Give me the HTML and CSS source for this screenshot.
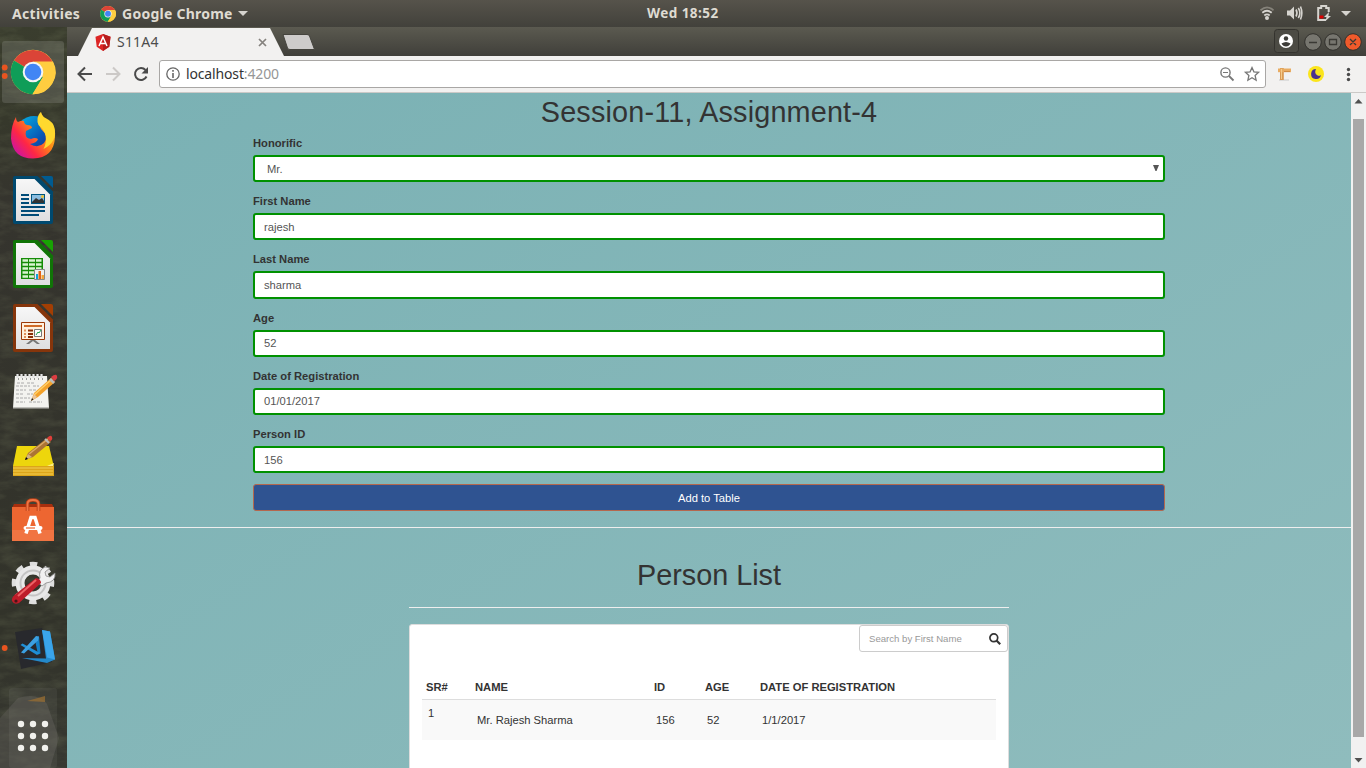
FILE: index.html
```html
<!DOCTYPE html>
<html lang="en">
<head>
<meta charset="utf-8">
<title>S11A4</title>
<link rel="stylesheet" href="styles.css">
</head>
<body>
<div class="desktop">
  <header class="topbar">
    <span class="activities">Activities</span>
    <svg class="mini-chrome" width="16" height="16" viewBox="10.5 50 45 45"><use href="#chrome-logo"/></svg>
    <span class="app-name">Google Chrome</span>
    <svg class="caret" width="10" height="5" viewBox="0 0 10 5"><path d="M0 0h10L5 5z" fill="#d6d4cf"/></svg>
    <span class="clock">Wed 18:52</span>
    <svg class="tray" width="106" height="27" viewBox="1260 0 106 27">
      <g fill="none" stroke-width="1.8"><path d="M1260.500 10.300Q1267 4.500 1273.500 10.300" stroke="#85827a"/><path d="M1262.300 12.800Q1267 8.800 1271.700 12.800M1264.300 15.500Q1267 13.200 1269.700 15.500" stroke="#d6d4cf"/></g>
      <circle cx="1267" cy="18" r="2" fill="#d6d4cf"/>
      <path d="M1287 10.500h3l4-4v13l-4-4h-3z" fill="#d6d4cf"/>
      <path d="M1296 9.500q2 3.500 0 7M1298.300 8q3.200 5 0 10M1300.500 6.500q2.700 6.500 0 13" fill="none" stroke="#d6d4cf" stroke-width="1.6"/>
      <path d="M1326 20h-7.800V8h3V6h5v2h2.500v4" fill="none" stroke="#d6d4cf" stroke-width="2"/>
      <path d="M1319.500 15.500h4v3h-4z" fill="#d00"/><path d="M1329 12l-5 5h2.500l-1 4 5.500-5h-2.600z" fill="#d6d4cf"/>
      <path d="M1341 11h10l-5 5z" fill="#d6d4cf"/>
    </svg>
  </header>
  <div class="workspace">
    <nav class="dock">
      <svg class="wallpaper" width="67" height="741" viewBox="0 27 67 741">
        <defs>
          <filter id="grass" x="0" y="0" width="100%" height="100%"><feTurbulence type="fractalNoise" baseFrequency=".045 .11" numOctaves="4" seed="8"/><feColorMatrix values="0 0 0 0 .33  0 0 0 0 .37  0 0 0 0 .2  1.6 0 0 0 -.6"/></filter>
          <linearGradient id="dusk" x2="0" y2="1"><stop offset="0" stop-color="#3a3d2e"/><stop offset=".12" stop-color="#36382b"/><stop offset=".24" stop-color="#35342e"/><stop offset=".82" stop-color="#32332a"/><stop offset="1" stop-color="#363731"/></linearGradient>
        </defs>
        <path d="M0 27h67v741H0z" fill="url(#dusk)"/>
        <path d="M0 27h67v741H0z" filter="url(#grass)" opacity=".2"/>
        <path d="M0 718L18 698Q38 692 47 704L59 738 50 768H0z" fill="#62605a" opacity=".4"/>
        <path d="M27 701l18-5v6z" fill="#8e6429" opacity=".8"/>
      </svg>
      <svg class="dock-icon" viewBox="0 40 67 64">
        <rect x="2" y="41" width="62" height="62" rx="3" fill="#fff" opacity=".13"/>
        <circle cx="4.700" cy="67.500" r="2.900" fill="#e95420"/><circle cx="4.700" cy="76" r="2.900" fill="#e95420"/>
        <g id="chrome-logo"><circle cx="33" cy="72" r="22.200" fill="#fc4"/>
        <path d="M33 72L14 60.500a22.200 22.200 0 0 1 38.700 1.500H33z" fill="#db4437"/>
        <path d="M33 72L14 60.500A22.200 22.200 0 0 0 32.500 94.200L43 77z" fill="#0f9d58"/>
        <path d="M33 61.500h20a22.200 22.200 0 0 1-20.500 32.700L43 77z" fill="#ffcd40"/>
        <circle cx="33" cy="72" r="10.300" fill="#f5f5f5"/><circle cx="33" cy="72" r="8.300" fill="#4285f4"/></g>
      </svg>
      <svg class="dock-icon" viewBox="0 104 67 64">
        <defs><linearGradient id="fox" x1=".9" y1=".1" x2=".1" y2=".8"><stop stop-color="#ffdc35"/><stop offset=".4" stop-color="#ff8a16"/><stop offset=".75" stop-color="#ff2744"/><stop offset="1" stop-color="#d61792"/></linearGradient><linearGradient id="globe" x2="1" y2="1"><stop stop-color="#05b9e8"/><stop offset=".6" stop-color="#0757b5"/><stop offset="1" stop-color="#291f79"/></linearGradient></defs>
        <circle cx="34" cy="135" r="19" fill="url(#globe)"/>
        <path d="M16 117q0 4 2 5 4-2 6-1 0 3 3 4 5 0 5 3l-6 3q-2 7 5 8 4-2 7 0-1 4-8 5 8 5 14-1 5-7-3-14-5-9 0-17 2 7 9 10 6 6 5 15-1 21-22 21.500-20 0-22-20Q11 125 16 117z" fill="url(#fox)"/>
        <path d="M40.500 112q-5 6-2 13 12 10 5 24 14-7 11-21-1-6-9-10-4-2-5-6z" fill="#ffd92e"/>
      </svg>
      <svg class="dock-icon" viewBox="0 168 67 64">
        <defs><linearGradient id="paper" x2="0" y2="1"><stop stop-color="#f7f7f7"/><stop offset="1" stop-color="#dedee0"/></linearGradient></defs>
        <path d="M15 176h22.500L53 191.500V222q0 2-2 2H15q-2 0-2-2v-44q0-2 2-2z" fill="#00496f"/><path d="M41 176h10q2 0 2 2v10z" fill="#005b91"/>
        <path d="M16 179h18.500l15.500 15.500V221H16z" fill="url(#paper)"/>
        <path d="M21 195h8m-8 4h8m-8 4h8m-8 4h24m-24 4h24m-24 4h18" stroke="#004b78" stroke-width="2"/><path d="M31 194h14v10H31z" fill="#00557f"/><path d="M32 195h12v8H32z" fill="#8bbde0"/><path d="M32 202l4-4 3 2 3-2 2 3v2H32z" fill="#333"/><circle cx="42.500" cy="196.500" r="1.500" fill="#edc33a"/>
      </svg>
      <svg class="dock-icon" viewBox="0 232 67 64">
        <path d="M15 240h22.500L53 255.500V286q0 2-2 2H15q-2 0-2-2v-44q0-2 2-2z" fill="#107407"/><path d="M41 240h10q2 0 2 2v10z" fill="#18a303"/>
        <path d="M16 243h18.500l15.500 15.500V285H16z" fill="url(#paper)"/>
        <path d="M21 258h22v21H21z" fill="#168c08"/><path d="M22.500 260.500h19m-19 4h19m-19 4h19m-19 4h19m-19 4h19" stroke="#d8f4d0" stroke-width="2.500"/><path d="M28.500 258v21m7-21v21" stroke="#168c08"/>
        <path d="M34.500 269.500h10v10h-10z" fill="#eee" stroke="#888"/><path d="M36 274h2v5h-2z" fill="#08a5dc"/><path d="M38.500 271h2.500v8h-2.500z" fill="#e36315"/><path d="M41.500 275h2.500v4h-2.500z" fill="#f3a73c"/>
      </svg>
      <svg class="dock-icon" viewBox="0 296 67 64">
        <path d="M15 304h22.500L53 319.500V350q0 2-2 2H15q-2 0-2-2v-44q0-2 2-2z" fill="#86350b"/><path d="M41 304h10q2 0 2 2v10z" fill="#a33e03"/>
        <path d="M16 307h18.500l15.500 15.500V349H16z" fill="url(#paper)"/>
        <path d="M21.500 322.500h23v17h-23z" fill="#fff1df" stroke="#9b3908"/><path d="M24 326h18" stroke="#cf6b28" stroke-width="2"/><path d="M24 330.500h2m-2 3.500h2m-2 3h2" stroke="#e0905c" stroke-width="2"/><path d="M28 330.500h5m-5 3.500h5m-5 3h5" stroke="#8a2f08" stroke-width="2"/><path d="M34.500 329.500h7v7h-7z" fill="#fff" stroke="#777"/><path d="M36 335l2-3 1 1 2-3" fill="none" stroke="#22a04b"/><path d="M31 340l-5 4h3l4-3 4 3h3l-5-4" fill="#777"/>
      </svg>
      <svg class="dock-icon" viewBox="0 360 67 64">
        <path d="M15 376h32l2 32H13z" fill="#f3f3ef"/><path d="M13 407h36v1.500H13z" fill="#bcbcb7"/>
        <path d="M17.500 378v-4m4 4v-4m4 4v-4m4 4v-4m4 4v-4m4 4v-4m4 4v-4" stroke="#e4e4e4" stroke-width="2.200"/><path d="M18 379h1m3 0h1m3 0h1m3 0h1m3 0h1m3 0h1m3 0h1" stroke="#444"/>
        <path d="M17 383h8m2 0h8M16 386h14m3 0h6M16 390h10m3 0h7M16 394h8m3 0h6M16 398h14M16 402h9m4 0h13" stroke="#aaa" stroke-dasharray="3 1"/>
        <path d="M31 401l3-8 17-15 4 4-17 15z" fill="#f3a12a"/><path d="M34 395l18-16" stroke="#ffd068" stroke-width="1.500"/><path d="M31 401l3-7 3 3z" fill="#e8c49b"/><path d="M31 401l1-3 1.500 1.500z" fill="#222"/><path d="M50 379l4 4" stroke="#bbb" stroke-width="2.500"/><path d="M51 377q5-4 6-1t-3 5z" fill="#dc3d42"/>
      </svg>
      <svg class="dock-icon" viewBox="0 424 67 64">
        <path d="M17 446h32l5 21-1 9H13v-10z" fill="#edd60c"/><path d="M13 466h41v10H13z" fill="#dca51a"/><path d="M13 468h40m-40 3h40m-40 3h40" stroke="#f4cf50"/><path d="M47 466l7-3-1 3z" fill="#fff086"/>
        <path d="M25 460l3-7 19-15 4 4-18 15z" fill="#ac7434"/><path d="M29 454l19-15" stroke="#dbab66" stroke-width="1.500"/><path d="M25 460l3-6 4 3z" fill="#d2b27c"/><path d="M25 460l1-3 2 2z"/><path d="M45 439l4 4" stroke="#bbb" stroke-width="2"/><path d="M47 438q4-4 5-1t-2 4z" fill="#df3f3a"/>
      </svg>
      <svg class="dock-icon" viewBox="0 488 67 64">
        <path d="M14 504h38l2 4H12z" fill="#a72f0e"/><path d="M12 507h42v34H12z" fill="#ed6631"/><path d="M12 530h42v11H12z" fill="#f17442"/><path d="M27.500 511v-7q0-4 5.500-4t5.500 4v7" fill="none" stroke="#bc4017" stroke-width="3.600"/><path d="M27.500 511v-7q0-4 5.500-4t5.500 4v7" fill="none" stroke="#ef7545" stroke-width="1.800"/>
        <path d="M26 533.500l5-16h4l5 16" fill="none" stroke="#fff" stroke-width="3.500"/><path d="M25.500 528h15" stroke="#fff" stroke-width="4" stroke-linecap="round"/><path d="M26 528h9" stroke="#ed6631" stroke-width="1.200"/>
      </svg>
      <svg class="dock-icon" viewBox="0 552 67 64">
        <circle cx="33" cy="583" r="18.800" fill="none" stroke="#dedede" stroke-width="5" stroke-dasharray="7.400 7.360" stroke-dashoffset="3.700"/><circle cx="33" cy="583" r="13" fill="none" stroke="#e8e8e8" stroke-width="9"/><circle cx="33" cy="583" r="12.500" fill="none" stroke="#c4c4c4" stroke-width="2"/>
        <path d="M37 582l3-4q-2-8 5-11l5 1-5 4 1 4 4 1 5-4q1 9-9 10l-4 3z" fill="#f1f1f1" stroke="#888" stroke-width=".8"/><path d="M36 578q5 1 5 5l-22 20q-5 2-7-2-1-4 5-8z" fill="#bd1c29"/><path d="M18 596l18-16" stroke="#ed6265" stroke-width="2"/><circle cx="16" cy="601" r="1.600" fill="#481418"/>
      </svg>
      <svg class="dock-icon" viewBox="0 616 67 64">
        <circle cx="4.700" cy="648" r="2.900" fill="#e95420"/><path d="M15 632l27-4 10 34-31 7z" fill="#28292d"/>
        <path d="M42 630l8 1.500 5 28-8 3.500-25-5 24 .5z" fill="#2489ca"/><path d="M42 630l8 1.500 5 28-8-2z" fill="#3aa5eb"/><path d="M39 636l1.500 17.500-2.500 1-2.500-12z" fill="#1480c6"/><path d="M20.500 645l2-1.500L40 653l-3 2z" fill="#1f8fd6"/><path d="M21 652.500L36 636l3 .5-1 4-14 13z" fill="#3ba0e2"/>
      </svg>
      <svg class="dock-icon apps" viewBox="0 680 67 88">
        <rect x="9" y="688" width="48" height="80" rx="3" fill="#fff" opacity=".05"/>
        <g fill="#f1f1ed"><circle cx="21" cy="724" r="3.200"/><circle cx="33" cy="724" r="3.200"/><circle cx="45" cy="724" r="3.200"/><circle cx="21" cy="736" r="3.200"/><circle cx="33" cy="736" r="3.200"/><circle cx="45" cy="736" r="3.200"/><circle cx="21" cy="748" r="3.200"/><circle cx="33" cy="748" r="3.200"/><circle cx="45" cy="748" r="3.200"/></g>
      </svg>
    </nav>
    <section class="browser">
      <div class="tabstrip">
        <div class="tab">
          <svg class="angular" width="16" height="17" viewBox="0 0 16 17"><path d="M8 0l7.500 2.800-1.200 10L8 17l-6.300-4.200-1.200-10z" fill="#dd2525"/><path d="M8 0l7.500 2.800-1.200 10L8 17z" fill="#b71c1c"/><path d="M4 12L8 3l4 9M5.500 9.500h5" fill="none" stroke="#fff" stroke-width="1.500"/></svg>
          <span class="tab-title">S11A4</span>
          <svg width="9" height="9" viewBox="0 0 9 9"><path d="M1 1l7 7M8 1L1 8" stroke="#85827e" stroke-width="1.700"/></svg>
        </div>
        <svg class="new-tab" width="34" height="16" viewBox="0 0 34 16"><path d="M1 .5h24q2 0 2.500 1.500L32.500 15.500H8q-2 0-2.500-1.500z" fill="#cecccb" stroke="#45443e"/></svg>
        <svg class="controls" width="96" height="29" viewBox="1270 27 96 29">
          <rect x="1274.500" y="29.500" width="24" height="23" rx="3" fill="#4c4b44" stroke="#34332e"/><circle cx="1286" cy="41" r="7" fill="#fff"/><circle cx="1286" cy="38.500" r="2.200" fill="#3c3b37"/><path d="M1281.500 43.500q4.500-3 9 0-1.500 3-4.500 3t-4.500-3z" fill="#3c3b37"/>
          <g fill="#77766f" stroke="#32312d"><circle cx="1313" cy="42" r="8.300"/><circle cx="1333" cy="42" r="8.300"/></g><circle cx="1353" cy="42" r="8.300" fill="#f05a2b" stroke="#32312d"/>
          <path d="M1309 42.500h8M1329.500 39.500h7v5h-7zM1350 39l6 6m0-6l-6 6" fill="none" stroke="#3a3934" stroke-width="1.300"/>
        </svg>
      </div>
      <div class="toolbar">
        <svg class="nav-icons" width="92" height="36" viewBox="67 56 92 36" fill="none" stroke-width="2"><path d="M92 74H79m6-6.500L78.500 74l6.500 6.500" stroke="#4a4a4a"/><path d="M106 74h13m-6-6.500l6.500 6.500-6.500 6.500" stroke="#ccc9c7"/><path d="M146.500 76.500A6 6 0 1 1 145.500 70" stroke="#4a4a4a"/><path d="M148 67v6.500h-6.500z" fill="#4a4a4a"/></svg>
        <div class="omnibox">
          <svg width="14" height="14" viewBox="0 0 14 14"><circle cx="7" cy="7" r="6.200" fill="none" stroke="#666" stroke-width="1.300"/><path d="M7 6v5M7 3v1.700" stroke="#666" stroke-width="1.600"/></svg>
          <span class="url">localhost<span class="port">:4200</span></span>
          <svg class="omni-icons" width="46" height="22" viewBox="1216 63 46 22" fill="none" stroke="#777"><circle cx="1225.500" cy="72.500" r="4.600" stroke-width="1.400"/><path d="M1229 76l4.500 4.500" stroke-width="1.800"/><path d="M1223 72.500h5"/><path d="M1252 67.500l1.900 4.300 4.700.5-3.500 3.200 1 4.700-4.100-2.500-4.100 2.500 1-4.700-3.500-3.200 4.700-.5z" stroke-width="1.300"/></svg>
        </div>
        <svg class="extensions" width="100" height="36" viewBox="1266 56 100 36"><path d="M1279 79h10v2h-10z" fill="#ddd"/><path d="M1280 68h3.800v12h-3.800z" fill="#d99a54"/><path d="M1278 68.500h13v3.700h-13z" fill="#e9ac62"/><path d="M1281.500 69v10" stroke="#f5cc8c"/><path d="M1284 71.500h6" stroke="#d08c44"/><circle cx="1316" cy="74" r="8" fill="#fbe51c"/><path d="M1316 69a5 5 0 1 0 5 6q-2 1.700-4 0-3-2-1-6z" fill="#4b318e"/><g fill="#4a4a4a"><circle cx="1348.500" cy="69.500" r="1.700"/><circle cx="1348.500" cy="74.500" r="1.700"/><circle cx="1348.500" cy="79.500" r="1.700"/></g></svg>
      </div>
      <div class="viewport">
        <main class="page">
          <h1 class="title main-title">Session-11, Assignment-4</h1>
          <form class="form">
            <div class="group"><label class="label">Honorific</label><div class="field select"><span>Mr.</span><svg width="6" height="6" viewBox="0 0 6 6"><path d="M0 0h6L3.500 6h-1z" fill="#555"/></svg></div></div>
            <div class="group"><label class="label">First Name</label><div class="field">rajesh</div></div>
            <div class="group"><label class="label">Last Name</label><div class="field">sharma</div></div>
            <div class="group"><label class="label">Age</label><div class="field">52</div></div>
            <div class="group"><label class="label">Date of Registration</label><div class="field">01/01/2017</div></div>
            <div class="group"><label class="label">Person ID</label><div class="field">156</div></div>
            <button class="add" type="button">Add to Table</button>
          </form>
          <hr class="rule">
          <section class="list">
            <h2 class="title list-title">Person List</h2>
            <hr class="rule list-rule">
            <div class="panel">
              <div class="search"><span>Search by First Name</span><svg width="12" height="12" viewBox="0 0 12 12" fill="none" stroke="#333"><circle cx="4.800" cy="4.800" r="3.900" stroke-width="1.700"/><path d="M7.500 7.500l3.700 3.700" stroke-width="2.200"/></svg></div>
              <div class="table">
                <div class="row head"><span>SR#</span><span>NAME</span><span>ID</span><span>AGE</span><span>DATE OF REGISTRATION</span></div>
                <div class="row record"><span class="serial">1</span><span>Mr. Rajesh Sharma</span><span>156</span><span>52</span><span>1/1/2017</span></div>
              </div>
            </div>
          </section>
        </main>
        <div class="scrollbar"><svg width="15" height="26" viewBox="0 0 15 26"><path d="M3.500 10.500h8l-4-4.500z" fill="#505050"/></svg><div class="thumb"></div><svg width="15" height="31" viewBox="0 0 15 31"><path d="M3.500 21h8l-4 4.500z" fill="#505050"/></svg></div>
      </div>
    </section>
  </div>
</div>
</body>
</html>
```
FILE: styles.css
```css
* { box-sizing: border-box; }
body { margin: 0; overflow: hidden; font-family: "Liberation Sans", Arial, sans-serif; }
svg { display: block; flex: none; }
.desktop { width: 1366px; height: 768px; display: flex; flex-direction: column; overflow: hidden; }
.topbar { position: relative; height: 27px; flex: none; display: flex; align-items: center; padding-left: 12px; background: linear-gradient(#56534b, #42413b); color: #dfdbd2; font: bold 14px/27px "Noto Sans", "Open Sans", sans-serif; white-space: nowrap; }
.activities { width: 88px; letter-spacing: .32px; }
.mini-chrome { margin-right: 6px; }
.app-name { width: 116px; font-size: 14px; letter-spacing: .25px; }
.clock { position: absolute; left: 647px; top: 0; font-size: 13.500px; letter-spacing: .45px; }
.tray { margin-left: auto; }
.workspace { flex: 1; display: flex; min-height: 0; }
.dock { position: relative; width: 67px; flex: none; padding-top: 13px; background: #35352c; }
.wallpaper { position: absolute; left: 0; top: 0; }
.dock-icon { position: relative; width: 67px; height: 64px; }
.apps { height: 88px; }
.browser { flex: 1; display: flex; flex-direction: column; min-width: 0; }
.tabstrip { height: 29px; flex: none; display: flex; background: linear-gradient(#5b5a50, #403f3a); }
.tab { width: 206px; height: 28px; margin: 1px 0 0 11px; padding: 0 17px; display: flex; align-items: center; background: #f2f1f0; clip-path: polygon(14px 0, 192px 0, 206px 100%, 0 100%); color: #4c4c4c; font: 14px/28px "Noto Sans", "Open Sans", sans-serif; }
.tab-title { flex: 1; padding-left: 6px; letter-spacing: .2px; }
.new-tab { margin: 7px 0 0 -2px; }
.controls { margin-left: auto; }
.toolbar { height: 37px; flex: none; display: flex; background: #f2f1f0; border-bottom: 1px solid #cbc9c7; }
.omnibox { width: 1107px; height: 28px; margin-top: 4px; display: flex; align-items: center; padding: 0 3px 0 6px; border: 1px solid #a9a7a5; border-radius: 3px; background: #fff; font: 14px/26px "Noto Sans", "Open Sans", sans-serif; color: #333; }
.url { flex: 1; padding-left: 6px; letter-spacing: -.15px; }
.port { color: #969696; }
.viewport { flex: 1; min-height: 0; display: flex; }
.page { flex: 1; overflow: hidden; background: linear-gradient(150deg, #7ab1b4, #8fbcbd); color: #333; font-size: 11.200px; line-height: 16px; }
.title { margin: 3px 0 7px; font-size: 28.800px; font-weight: 500; line-height: 32px; text-align: center; }
.main-title { letter-spacing: .17px; }
.form { width: 912px; margin: 0 auto; }
.group { height: 58.200px; }
.label { display: block; margin-bottom: 4px; font-weight: bold; }
.field { height: 27.200px; padding: .6px 9px 0; border: 2px solid #009100; border-radius: 3px; background: #fff; color: #555; line-height: 22px; }
.select { display: flex; justify-content: space-between; align-items: center; padding: 0 4px 0 12px; line-height: 24px; }
.select svg { margin-bottom: 2px; }
.add { display: block; width: 912px; height: 27px; margin: -.2px 0 0; padding: 1.400px 0 0; border: 1px solid #b4674d; border-radius: 3px; background: #2f5391; color: #fff; font: 11.200px/23px "Liberation Sans", Arial, sans-serif; }
.rule { height: 1px; margin: 15.700px 0 0; border: 0; background: #eee; }
.list { width: 600px; margin: 0 auto; padding-top: 31px; }
.list-title { margin: 0; }
.list-rule { margin-top: 16px; }
.panel { height: 220px; margin-top: 16px; padding: 0 12px; background: #fff; border: 1px solid #ddd; border-radius: 3px; }
.search { width: 149px; height: 27px; margin: 0 -12px 0 auto; padding: 1px 6px 0 9px; display: flex; align-items: center; justify-content: space-between; border: 1px solid #ccc; border-radius: 3px; color: #999; font-size: 9.600px; }
.table { margin-top: 24px; }
.row { display: grid; grid-template-columns: 49px 179px 51px 55px 1fr; padding-left: 4px; }
.head { height: 24px; border-bottom: 1px solid #ddd; font-weight: bold; line-height: 22px; }
.record { height: 40px; padding-left: 6px; background: #f9f9f9; line-height: 40px; }
.serial { line-height: 26px; }
.scrollbar { width: 15px; flex: none; display: flex; flex-direction: column; background: #f1f1f1; }
.thumb { flex: 1; margin: 0 2px; background: #a8a8a8; }
```
